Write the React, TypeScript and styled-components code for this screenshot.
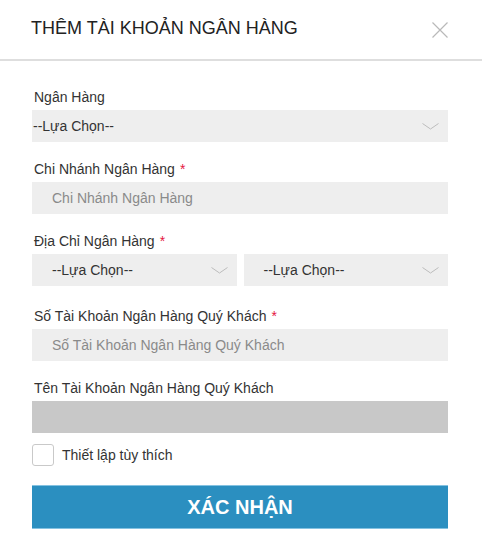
import styled, { createGlobalStyle } from "styled-components";

const GlobalStyle = createGlobalStyle`
  html, body {
    margin: 0;
    padding: 0;
    background: #fff;
  }
  body {
    font-family: "Liberation Sans", Arial, sans-serif;
    color: #333;
  }
`;

const Modal = styled.div`
  width: 482px;
  height: 555px;
  background: #fff;
  overflow: hidden;
`;

const Header = styled.div`
  display: flex;
  align-items: center;
  justify-content: space-between;
  height: 59px;
  padding: 0 33px 0 31px;
  border-bottom: 2px solid #dedede;
  box-sizing: content-box;
`;

const Title = styled.h2`
  margin: -3px 0 0;
  font-size: 18px;
  font-weight: normal;
  color: #222;
`;

const CloseButton = styled.button`
  display: flex;
  align-items: center;
  justify-content: center;
  width: 18px;
  height: 18px;
  padding: 0;
  margin-top: 1px;
  border: none;
  background: none;
  cursor: pointer;
`;

const Body = styled.form`
  padding: 26px 34px 0 32px;
`;

const Field = styled.div<{ $space?: number }>`
  margin-bottom: ${({ $space = 17 }) => $space}px;
`;

const Label = styled.label`
  display: block;
  height: 20px;
  line-height: 20px;
  margin-bottom: 3px;
  padding-left: 2px;
  font-size: 14px;
  color: #333;
`;

const Required = styled.span`
  color: #e5173f;
  margin-left: 5px;
`;

const Row = styled.div`
  display: grid;
  grid-template-columns: 1fr 1fr;
  gap: 7px;
`;

const SelectBox = styled.div<{ $inset?: boolean }>`
  display: flex;
  align-items: center;
  justify-content: space-between;
  height: 32px;
  padding: 0 9px 0 ${({ $inset }) => ($inset ? "20px" : "1px")};
  background: #eeeeee;
  font-size: 14px;
  color: #333;
`;

const Input = styled.input<{ $disabled?: boolean }>`
  display: block;
  width: 100%;
  height: 32px;
  box-sizing: border-box;
  padding: 0 20px;
  border: none;
  outline: none;
  background: ${({ $disabled }) => ($disabled ? "#c8c8c8" : "#eeeeee")};
  font-family: inherit;
  font-size: 14px;
  color: #333;

  &::placeholder {
    color: #8a8a8a;
  }
`;

const CheckRow = styled.label`
  display: flex;
  align-items: center;
  gap: 8px;
  margin-top: -6px;
  font-size: 14px;
  color: #333;
`;

const CheckBox = styled.span`
  width: 20px;
  height: 20px;
  border: 1px solid #c9c9c9;
  border-radius: 3px;
  background: #fff;
`;

const Submit = styled.button`
  display: block;
  width: 100%;
  height: 44px;
  margin-top: 19px;
  border: none;
  border-top: 1px solid #84c2e1;
  border-bottom: 1px solid #84c2e1;
  background: #2b8fc0;
  color: #fff;
  font-family: inherit;
  font-size: 20px;
  font-weight: bold;
  cursor: pointer;
`;

const Chevron = () => (
  <svg width="17" height="7" viewBox="0 0 17 7" fill="none">
    <path d="M0.5 0.5 L8.5 6 L16.5 0.5" stroke="#bcbcbc" strokeWidth="1" />
  </svg>
);

const CloseIcon = () => (
  <svg width="16" height="16" viewBox="0 0 16 16" fill="none">
    <path d="M0.5 0.5 L15.5 15.5 M15.5 0.5 L0.5 15.5" stroke="#b9b9b9" strokeWidth="1.2" />
  </svg>
);

const Select = ({ inset }: { inset?: boolean }) => (
  <SelectBox $inset={inset}>
    <span>--Lựa Chọn--</span>
    <Chevron />
  </SelectBox>
);

export default function App() {
  return (
    <>
      <GlobalStyle />
      <Modal>
        <Header>
          <Title>THÊM TÀI KHOẢN NGÂN HÀNG</Title>
          <CloseButton type="button" aria-label="Đóng">
            <CloseIcon />
          </CloseButton>
        </Header>
        <Body onSubmit={(e) => e.preventDefault()}>
          <Field>
            <Label>Ngân Hàng</Label>
            <Select />
          </Field>
          <Field>
            <Label>
              Chi Nhánh Ngân Hàng<Required>*</Required>
            </Label>
            <Input placeholder="Chi Nhánh Ngân Hàng" />
          </Field>
          <Field $space={20}>
            <Label>
              Địa Chỉ Ngân Hàng<Required>*</Required>
            </Label>
            <Row>
              <Select inset />
              <Select inset />
            </Row>
          </Field>
          <Field>
            <Label>
              Số Tài Khoản Ngân Hàng Quý Khách<Required>*</Required>
            </Label>
            <Input placeholder="Số Tài Khoản Ngân Hàng Quý Khách" />
          </Field>
          <Field>
            <Label>Tên Tài Khoản Ngân Hàng Quý Khách</Label>
            <Input $disabled disabled />
          </Field>
          <CheckRow>
            <CheckBox />
            Thiết lập tùy thích
          </CheckRow>
          <Submit type="submit">XÁC NHẬN</Submit>
        </Body>
      </Modal>
    </>
  );
}
